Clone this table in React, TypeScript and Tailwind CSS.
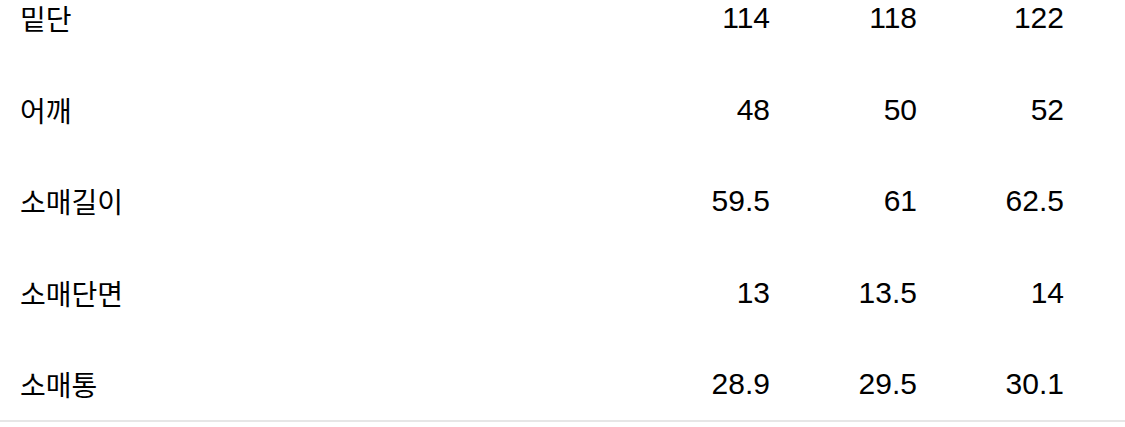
import React from "react";

const rows: [string, string, string, string][] = [
  ["밑단", "114", "118", "122"],
  ["어깨", "48", "50", "52"],
  ["소매길이", "59.5", "61", "62.5"],
  ["소매단면", "13", "13.5", "14"],
  ["소매통", "28.9", "29.5", "30.1"],
];

export default function App() {
  return (
    <div className="w-[1125px] h-[427px] overflow-hidden bg-white text-black">
      <div className="flex flex-col gap-[55.5px] pb-[18px] border-b-2 border-[#e6e6e6]">
        {rows.map((r) => (
          <div
            key={r[0]}
            className="grid grid-cols-[1fr_147px_147px_147px] items-center h-[36px] pl-[20px] pr-[61px]"
          >
            <div
              className="text-[28px] leading-[36px]"
              style={{ fontFamily: '"Noto Sans CJK KR", sans-serif' }}
            >
              {r[0]}
            </div>
            {r.slice(1).map((v, i) => (
              <div
                key={i}
                className="text-right text-[30px] leading-[36px] font-['Liberation_Sans','Noto_Sans_CJK_KR',sans-serif]"
              >
                {v}
              </div>
            ))}
          </div>
        ))}
      </div>
    </div>
  );
}
